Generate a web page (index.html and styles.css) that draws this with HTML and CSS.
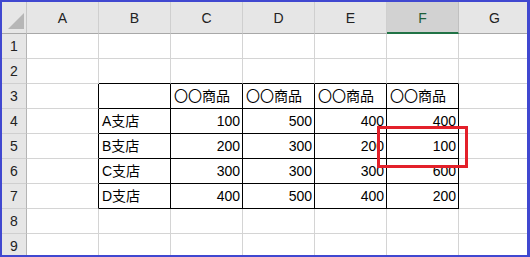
FILE: index.html
```html
<!DOCTYPE html>
<html lang="ja">
<head>
    <meta charset="UTF-8">
    <title>Sheet</title>
    <link rel="stylesheet" href="styles.css">
</head>
<body>
    <div class="frame">
        <div class="sheet">
            <!-- header row -->
            <div class="corner"><span class="tri"></span></div>
            <div class="colhead">A</div>
            <div class="colhead">B</div>
            <div class="colhead">C</div>
            <div class="colhead">D</div>
            <div class="colhead">E</div>
            <div class="colhead active">F</div>
            <div class="colhead">G</div>

            <div class="rowhead">1</div>
            <div class="cell"></div><div class="cell"></div><div class="cell"></div><div class="cell"></div><div class="cell"></div><div class="cell"></div><div class="cell"></div>

            <div class="rowhead">2</div>
            <div class="cell"></div><div class="cell bt"></div><div class="cell bt"></div><div class="cell bt"></div><div class="cell bt"></div><div class="cell bt"></div><div class="cell"></div>

            <div class="rowhead">3</div>
            <div class="cell bl"></div>
            <div class="cell bx"></div>
            <div class="cell bx">〇〇商品</div>
            <div class="cell bx">〇〇商品</div>
            <div class="cell bx">〇〇商品</div>
            <div class="cell bx">〇〇商品</div>
            <div class="cell"></div>

            <div class="rowhead">4</div>
            <div class="cell bl"></div>
            <div class="cell bx">A支店</div>
            <div class="cell bx num">100</div>
            <div class="cell bx num">500</div>
            <div class="cell bx num">400</div>
            <div class="cell bx num">400</div>
            <div class="cell"></div>

            <div class="rowhead">5</div>
            <div class="cell bl"></div>
            <div class="cell bx">B支店</div>
            <div class="cell bx num">200</div>
            <div class="cell bx num">300</div>
            <div class="cell bx num">200</div>
            <div class="cell bx num">100</div>
            <div class="cell"></div>

            <div class="rowhead">6</div>
            <div class="cell bl"></div>
            <div class="cell bx">C支店</div>
            <div class="cell bx num">300</div>
            <div class="cell bx num">300</div>
            <div class="cell bx num">300</div>
            <div class="cell bx num">600</div>
            <div class="cell"></div>

            <div class="rowhead">7</div>
            <div class="cell bl"></div>
            <div class="cell bx">D支店</div>
            <div class="cell bx num">400</div>
            <div class="cell bx num">500</div>
            <div class="cell bx num">400</div>
            <div class="cell bx num">200</div>
            <div class="cell"></div>

            <div class="rowhead">8</div>
            <div class="cell"></div><div class="cell"></div><div class="cell"></div><div class="cell"></div><div class="cell"></div><div class="cell"></div><div class="cell"></div>

            <div class="rowhead">9</div>
            <div class="cell"></div><div class="cell"></div><div class="cell"></div><div class="cell"></div><div class="cell"></div><div class="cell"></div><div class="cell"></div>
        </div>
        <div class="highlight"></div>
    </div>
</body>
</html>
```

FILE: styles.css
```css
body {
    margin: 0;
    background: #ffffff;
    font-family: "Liberation Sans", "Noto Sans CJK JP", sans-serif;
    font-size: 14px;
    color: #000;
}
.frame {
    position: relative;
    width: 530px;
    height: 257px;
    box-sizing: border-box;
    border-style: solid;
    border-color: #4048d0;
    border-width: 2px 3px 2px 2px;
    overflow: hidden;
}
.sheet {
    display: grid;
    grid-template-columns: 25px repeat(7, 72px);
    grid-template-rows: 32px repeat(9, 25px);
}
.sheet > div {
    box-sizing: border-box;
}
.corner {
    background: #e6e6e6;
    border-right: 1px solid #c6c6c6;
    border-bottom: 1px solid #a8a8a8;
    display: flex;
    align-items: flex-end;
    justify-content: flex-end;
    padding: 0 2px 4px 0;
}
.tri {
    width: 0;
    height: 0;
    border-left: 16px solid transparent;
    border-bottom: 16px solid #b6b6b6;
}
.colhead {
    background: #e6e6e6;
    border-right: 1px solid #cfcfcf;
    border-bottom: 1px solid #a8a8a8;
    display: flex;
    align-items: center;
    justify-content: center;
    color: #222;
    padding-top: 1px;
}
.colhead.active {
    background: #d2d2d2;
    color: #1d5e38;
    border-bottom: 2px solid #217346;
    border-right-color: #c0c0c0;
}
.rowhead {
    background: #e6e6e6;
    border-right: 1px solid #b4b4b4;
    border-bottom: 1px solid #cfcfcf;
    display: flex;
    align-items: center;
    justify-content: center;
    color: #222;
}
.cell {
    border-right: 1px solid #d4d4d4;
    border-bottom: 1px solid #d4d4d4;
    display: flex;
    align-items: flex-end;
    line-height: 17px;
    padding: 0 2px 3px 3px;
    white-space: nowrap;
}
.cell.num {
    justify-content: flex-end;
}
.cell.bx {
    border-right-color: #000;
    border-bottom-color: #000;
}
.cell.bl {
    border-right-color: #000;
}
.cell.bt {
    border-bottom-color: #000;
}
.highlight {
    position: absolute;
    left: 375px;
    top: 124px;
    width: 91px;
    height: 42px;
    box-sizing: border-box;
    border: 3px solid #e3202a;
}
```
